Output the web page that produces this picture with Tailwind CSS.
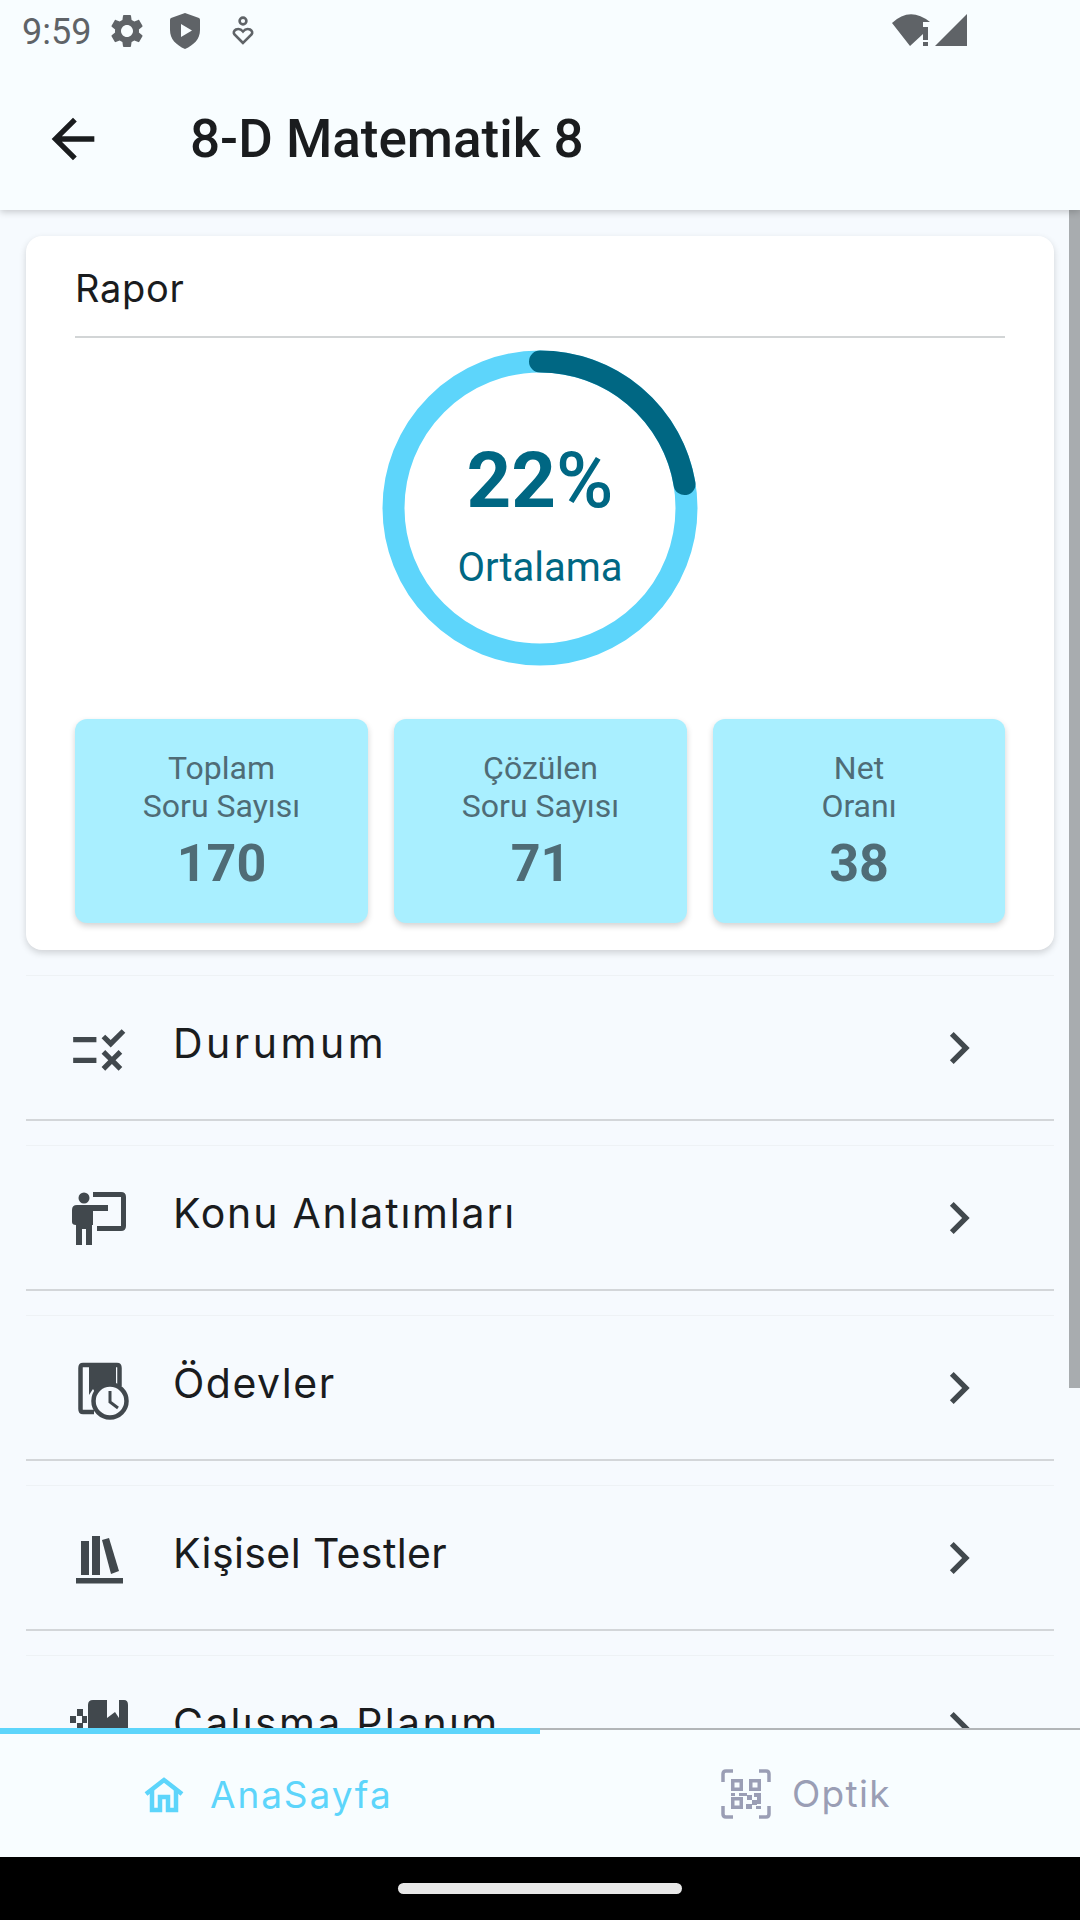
<!DOCTYPE html>
<html><head><meta charset="utf-8">
<script src="https://cdn.jsdelivr.net/npm/@tailwindcss/browser@4"></script>
</head>
<body class="m-0">
<div class="w-[1080px] h-[1920px] flex flex-col overflow-hidden bg-[#f6fafe] font-['Inter',sans-serif] text-[#1a1c1e]">
  <!-- status bar + app bar -->
  <header class="relative z-10 h-[210px] shrink-0 bg-[#f8fdff] shadow-[0_2px_7px_rgba(0,0,0,0.2)] flex flex-col">
    <div class="h-[70px] flex items-start relative text-[#5f6367]">
      <span class="ml-[22px] mt-[11px] font-['Roboto',sans-serif] text-[36px] leading-[42px]">9:59</span>
      <svg class="ml-[16px] mt-[11px] w-[40px] h-[40px]" viewBox="0 0 24 24" fill="#5f6367"><path d="M19.14 12.94c.04-.3.06-.61.06-.94 0-.32-.02-.64-.07-.94l2.03-1.58c.18-.14.23-.41.12-.61l-1.92-3.32c-.12-.22-.37-.29-.59-.22l-2.39.96c-.5-.38-1.03-.7-1.62-.94l-.36-2.54c-.04-.24-.24-.41-.48-.41h-3.84c-.24 0-.43.17-.47.41l-.36 2.54c-.59.24-1.13.57-1.62.94l-2.39-.96c-.22-.08-.47 0-.59.22L2.74 8.87c-.12.21-.08.47.12.61l2.03 1.58c-.05.3-.09.63-.09.94s.02.64.07.94l-2.03 1.58c-.18.14-.23.41-.12.61l1.92 3.32c.12.22.37.29.59.22l2.39-.96c.5.38 1.03.7 1.62.94l.36 2.54c.05.24.24.41.48.41h3.84c.24 0 .44-.17.47-.41l.36-2.54c.59-.24 1.13-.56 1.62-.94l2.39.96c.22.08.47 0 .59-.22l1.92-3.32c.12-.22.07-.47-.12-.61l-2.01-1.58zM12 15.6c-1.98 0-3.6-1.62-3.6-3.6s1.62-3.6 3.6-3.6 3.6 1.62 3.6 3.6-1.62 3.6-3.6 3.6z"/></svg>
      <svg class="ml-[21px] mt-[12px] w-[34px] h-[38px]" viewBox="0 0 34 38"><path fill="#5f6367" fill-rule="evenodd" d="M17 1 L31 6 Q32 6.5 32 8 V18 C32 27 26 33 17 37 C8 33 2 27 2 18 V8 Q2 6.5 3 6 Z M13 12 V25 L24 18.5 Z"/></svg>
      <svg class="ml-[29px] mt-[16px] w-[24px] h-[30px]" viewBox="0 0 24 30" fill="none" stroke="#5f6367" stroke-width="2.6"><circle cx="12" cy="5" r="3.4"/><path d="M12 27 L3.5 18.5 Q1.5 15.5 5 13.5 Q9 12 12 15.5 Q15 12 19 13.5 Q22.5 15.5 20.5 18.5 Z"/></svg>
      <svg class="absolute left-[890px] top-[12px] w-[80px] h-[36px]" viewBox="0 0 80 36" fill="#5f6367"><path d="M2 11 Q20 -6 40 10 L33 10 V22 L20 34 Z"/><rect x="33" y="15" width="5" height="13"/><rect x="33" y="30" width="5" height="4"/><path d="M45 34 L77 2 V34 Z"/></svg>
    </div>
    <div class="flex-1 flex items-center pb-[2px]">
      <svg class="ml-[41px] w-[64px] h-[64px]" viewBox="0 0 24 24" fill="#1a1c1e"><path d="M20 11H7.83l5.59-5.59L12 4l-8 8 8 8 1.41-1.41L7.83 13H20v-2z"/></svg>
      <h1 class="ml-[85px] font-['Roboto',sans-serif] font-medium text-[53px] leading-[60px]">8-D Matematik 8</h1>
    </div>
  </header>

  <!-- content -->
  <main class="relative flex-1 overflow-hidden px-[26px] pt-[26px]">
    <div class="absolute right-0 top-0 w-[11px] h-[1178px] bg-[#a8acaf]"></div>

    <section class="h-[714px] bg-white rounded-[16px] shadow-[0_3px_7px_rgba(0,0,0,0.16)] px-[49px] flex flex-col">
      <div class="h-[102px] border-b-2 border-[#d2d5d6] pt-[29px] text-[38px] leading-[46px] tracking-[0.7px]">Rapor</div>
      <div class="relative h-[330px] mt-[12px] flex flex-col items-center">
        <svg class="w-[316px] h-[316px]" viewBox="0 0 316 316" fill="none">
          <circle cx="158" cy="158" r="146.500" stroke="#5dd5fb" stroke-width="22"/>
          <circle cx="158" cy="158" r="146.500" stroke="#006783" stroke-width="22" stroke-linecap="round" stroke-dasharray="206 924" transform="rotate(-90 158 158)"/>
        </svg>
        <div class="absolute inset-x-0 top-[85px] flex flex-col items-center font-['Roboto',sans-serif] text-[#006783]">
          <div class="text-[78px] leading-[92px]"><span class="font-bold">22</span><span class="font-medium">%</span></div>
          <div class="text-[40px] leading-[48px] mt-[17px]">Ortalama</div>
        </div>
      </div>
      <div class="grid grid-cols-[293px_292.5px_292px] gap-[26.25px] mt-[39px] font-['Roboto',sans-serif] text-center text-[#4f6c76]">
        <div class="h-[204px] rounded-[12px] bg-[#a9efff] shadow-[0_3px_6px_rgba(0,0,0,0.18)] pt-[30px] text-[32px] leading-[38px]">Toplam<br>Soru Sayısı<div class="font-bold text-[52px] leading-[60px] mt-[9px]">170</div></div>
        <div class="h-[204px] rounded-[12px] bg-[#a9efff] shadow-[0_3px_6px_rgba(0,0,0,0.18)] pt-[30px] text-[32px] leading-[38px]">Çözülen<br>Soru Sayısı<div class="font-bold text-[52px] leading-[60px] mt-[9px]">71</div></div>
        <div class="h-[204px] rounded-[12px] bg-[#a9efff] shadow-[0_3px_6px_rgba(0,0,0,0.18)] pt-[30px] text-[32px] leading-[38px]">Net<br>Oranı<div class="font-bold text-[52px] leading-[60px] mt-[9px]">38</div></div>
      </div>
    </section>

    <ul class="mt-[25px] flex flex-col gap-[24px]">
      <li class="h-[146px] relative flex items-start border-t border-b-2 border-t-[#eef2f5] border-b-[#d3d6d9] text-[41px] leading-[50px] tracking-[3.5px]">
        <svg class="absolute left-[42px] top-[43px] w-[62px] h-[62px]" viewBox="0 0 24 24" fill="#41484d"><path d="M16.54 11L13 7.46l1.41-1.41 2.12 2.12 4.24-4.24 1.41 1.41L16.54 11zM11 7H2v2h9V7zm10 6.41L19.59 12 17 14.59 14.41 12 13 13.41 15.59 16 13 18.59 14.41 20 17 17.41 19.59 20 21 18.59 18.41 16 21 13.41zM11 15H2v2h9v-2z"/></svg>
        <span class="ml-[147px] mt-[42px]">Durumum</span>
        <svg class="absolute left-[901px] top-[40px] w-[64px] h-[64px]" viewBox="0 0 24 24" fill="#41484d"><path d="M10 6L8.59 7.41 13.17 12l-4.58 4.59L10 18l6-6z"/></svg>
      </li>
      <li class="h-[146px] relative flex items-start border-t border-b-2 border-t-[#eef2f5] border-b-[#d3d6d9] text-[41px] leading-[50px] tracking-[1.8px]">
        <svg class="absolute left-[46px] top-[46px] w-[56px] h-[56px]" viewBox="0 0 56 56" fill="#41484d"><circle cx="12" cy="6" r="5.5"/><path d="M21 0 H49 Q54 0 54 5 V34 Q54 39 49 39 H25 V34 H49 V5 H21 Z"/><path d="M5 13 H36 V19 H21 V33 H20 V53 H14 V37 H10 V53 H4 V33 Q0 33 0 30 V18 Q0 13 5 13 Z"/></svg>
        <span class="ml-[147px] mt-[42px]">Konu Anlatımları</span>
        <svg class="absolute left-[901px] top-[40px] w-[64px] h-[64px]" viewBox="0 0 24 24" fill="#41484d"><path d="M10 6L8.59 7.41 13.17 12l-4.58 4.59L10 18l6-6z"/></svg>
      </li>
      <li class="h-[146px] relative flex items-start border-t border-b-2 border-t-[#eef2f5] border-b-[#d3d6d9] text-[41px] leading-[50px] tracking-[1.5px]">
        <svg class="absolute left-[52px] top-[46px] w-[52px] h-[60px]" viewBox="0 0 52 60" fill="none"><path d="M16 50 H5 Q2.500 50 2.500 47 V6 Q2.500 3 5 3 H39 Q41.500 3 41.500 6 V24" stroke="#41484d" stroke-width="4.500"/><path fill="#41484d" d="M11 4 H38 V22 Q26 22 18 32 L15 27 L11 33 Z"/><circle cx="32" cy="39" r="16.500" fill="#f6fafe" stroke="#41484d" stroke-width="4.500"/><path d="M32 29 V40 L40 46" stroke="#41484d" stroke-width="3"/></svg>
        <span class="ml-[147px] mt-[42px]">Ödevler</span>
        <svg class="absolute left-[901px] top-[40px] w-[64px] h-[64px]" viewBox="0 0 24 24" fill="#41484d"><path d="M10 6L8.59 7.41 13.17 12l-4.58 4.59L10 18l6-6z"/></svg>
      </li>
      <li class="h-[146px] relative flex items-start border-t border-b-2 border-t-[#eef2f5] border-b-[#d3d6d9] text-[41px] leading-[50px] tracking-[0.4px]">
        <svg class="absolute left-[50px] top-[50px] w-[48px] h-[48px]" viewBox="0 0 48 48" fill="#41484d"><rect x="5" y="5" width="8" height="34"/><rect x="16" y="0" width="8" height="39"/><path d="M26 4 L33 2 L43 35 L35 38 Z"/><rect x="0" y="42" width="47" height="5.500"/></svg>
        <span class="ml-[147px] mt-[42px]">Kişisel Testler</span>
        <svg class="absolute left-[901px] top-[40px] w-[64px] h-[64px]" viewBox="0 0 24 24" fill="#41484d"><path d="M10 6L8.59 7.41 13.17 12l-4.58 4.59L10 18l6-6z"/></svg>
      </li>
      <li class="h-[146px] relative flex items-start border-t border-b-2 border-t-[#eef2f5] border-b-[#d3d6d9] text-[41px] leading-[50px] tracking-[2.3px]">
        <svg class="absolute left-[44px] top-[44px] w-[60px] h-[60px]" viewBox="0 0 60 60" fill="#41484d"><path d="M18 5 Q18 0 23 0 H37 V18 L45 12 L49 18 V0 H54 Q58 0 58 5 V60 H18 Z"/><rect x="0" y="16" width="6" height="7"/><rect x="7" y="9" width="6" height="7"/><rect x="7" y="23" width="6" height="7"/><rect x="12" y="16" width="5" height="7"/></svg>
        <span class="ml-[147px] mt-[42px]">Çalışma Planım</span>
        <svg class="absolute left-[901px] top-[40px] w-[64px] h-[64px]" viewBox="0 0 24 24" fill="#41484d"><path d="M10 6L8.59 7.41 13.17 12l-4.58 4.59L10 18l6-6z"/></svg>
      </li>
    </ul>
  </main>

  <!-- bottom nav -->
  <nav class="relative z-10 h-[129px] shrink-0 bg-[#f8fdff] border-t-2 border-[#b2b5b8] grid grid-cols-2">
    <div class="absolute left-0 -top-[2px] w-[540px] h-[6px] bg-[#5dd5fb]"></div>
    <div class="flex items-center pl-[142px] pt-[2px] text-[#5dd5fb] text-[37px] tracking-[1.9px]">
      <svg class="w-[44px] h-[36px]" viewBox="0 0 44 36" fill="none" stroke="#5dd5fb" stroke-width="4.500"><path d="M4 17 L22 3 L40 17"/><path d="M10 13 V33 H18 V20 H26 V33 H34 V13"/></svg>
      <span class="ml-[24px]">AnaSayfa</span>
    </div>
    <div class="flex items-center pl-[181px] text-[#9a9eb5] text-[37px] tracking-[1.3px]">
      <svg class="w-[50px] h-[50px]" viewBox="0 0 50 50" fill="#9a9eb5"><path d="M12 2 H5 Q2 2 2 5 V13" fill="none" stroke="#9a9eb5" stroke-width="3.500"/><path d="M38 2 H45 Q48 2 48 5 V13" fill="none" stroke="#9a9eb5" stroke-width="3.500"/><path d="M12 48 H5 Q2 48 2 45 V37" fill="none" stroke="#9a9eb5" stroke-width="3.500"/><path d="M38 48 H45 Q48 48 48 45 V37" fill="none" stroke="#9a9eb5" stroke-width="3.500"/><path fill-rule="evenodd" d="M10 10 H22 V22 H10 Z M13.500 13.500 V18.500 H18.500 V13.500 Z M28 10 H40 V22 H28 Z M31.500 13.500 V18.500 H36.500 V13.500 Z M10 28 H22 V40 H10 Z M13.500 31.500 V36.500 H18.500 V31.500 Z"/><rect x="10" y="24" width="4" height="3"/><rect x="18" y="24" width="8" height="3"/><rect x="26" y="26" width="5" height="5"/><rect x="33" y="24" width="7" height="4"/><rect x="31" y="31" width="5" height="5"/><rect x="36" y="28" width="4" height="7"/><rect x="25" y="35" width="6" height="5"/><rect x="35" y="37" width="5" height="3"/></svg>
      <span class="ml-[21px]">Optik</span>
    </div>
  </nav>

  <!-- gesture bar -->
  <div class="h-[63px] shrink-0 bg-black flex justify-center pt-[26px]">
    <div class="w-[284px] h-[11px] rounded-full bg-[#e8e8e8]"></div>
  </div>
</div>
</body></html>
